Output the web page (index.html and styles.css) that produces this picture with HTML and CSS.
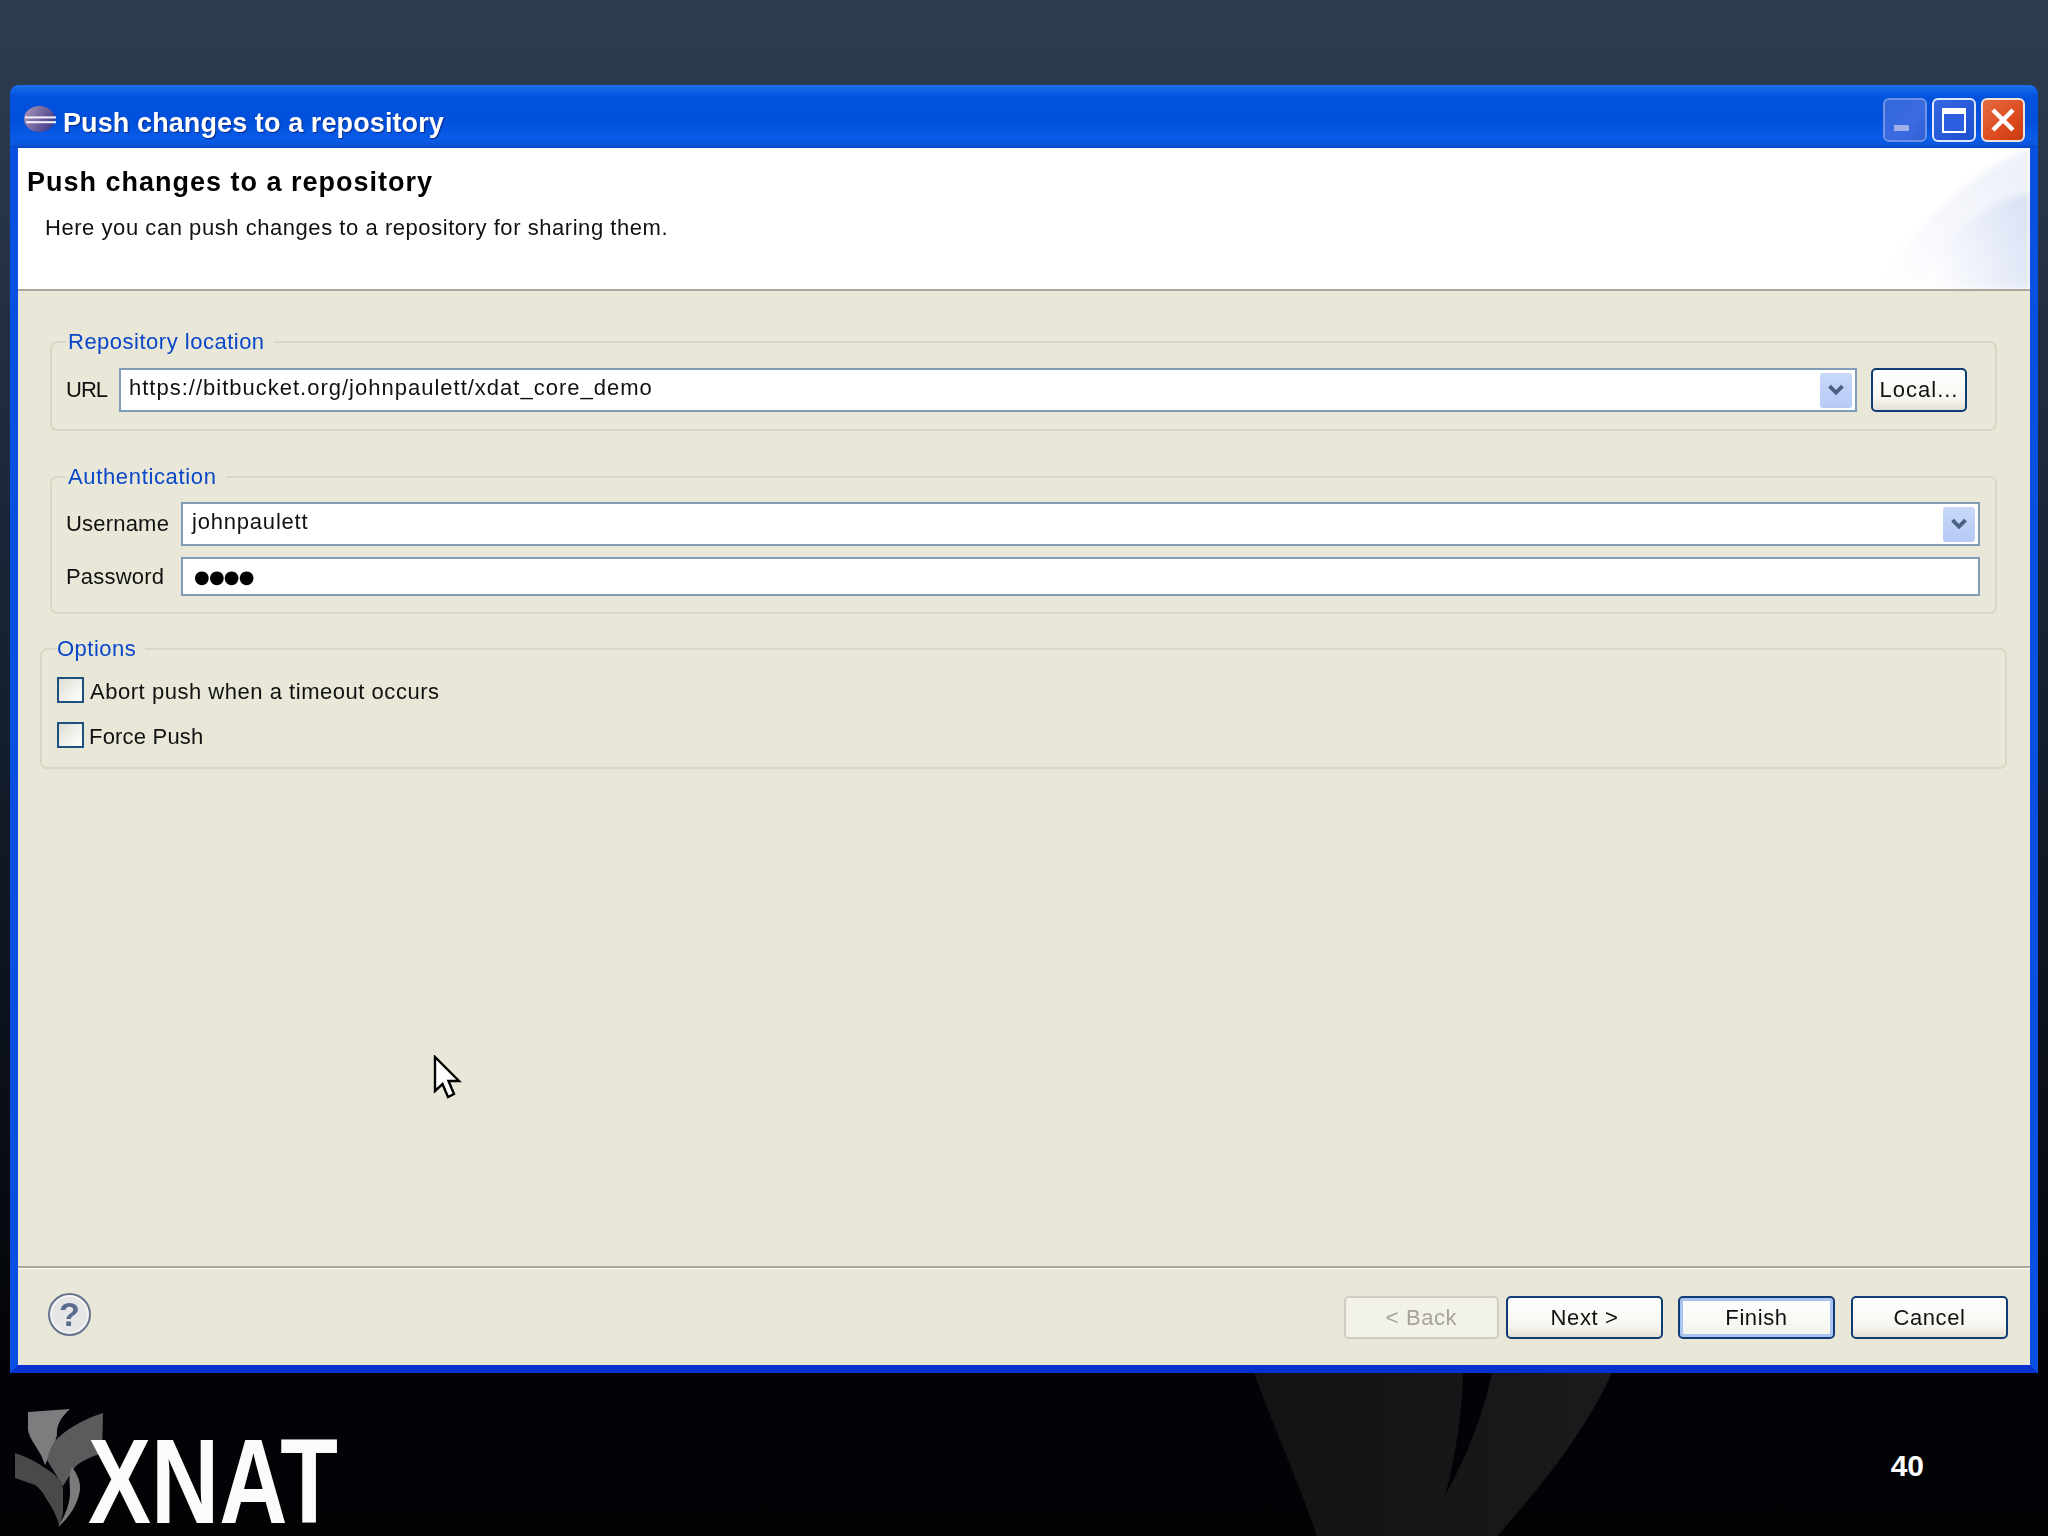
FILE: index.html
```html
<!DOCTYPE html>
<html lang="en">
<head>
<meta charset="utf-8">
<title>Push changes to a repository</title>
<link rel="stylesheet" href="styles.css">
</head>
<body>
<main class="window">
  <header class="titlebar">
    <svg class="app-icon" viewBox="0 0 32 26" aria-hidden="true">
      <defs>
        <linearGradient id="ecl" x1="0" y1="0.2" x2="1" y2="0.7">
          <stop offset="0" stop-color="#a692b4"/>
          <stop offset="0.55" stop-color="#6f5f9c"/>
          <stop offset="1" stop-color="#3c3a8c"/>
        </linearGradient>
      </defs>
      <ellipse cx="15.5" cy="13" rx="15.5" ry="13" fill="url(#ecl)"/>
      <rect x="1" y="10.4" width="31" height="2" fill="#f2f2fa"/>
      <rect x="2" y="15.2" width="30" height="2" fill="#f2f2fa"/>
    </svg>
    <span class="title-text">Push changes to a repository</span>
    <div class="win-controls">
      <span class="win-btn win-min"><span class="min-bar"></span></span>
      <span class="win-btn win-max"><span class="max-box"></span></span>
      <span class="win-btn win-close">
        <svg viewBox="0 0 24 24" class="close-x" aria-hidden="true"><path d="M2 2 L22 22 M22 2 L2 22" stroke="#fff" stroke-width="4.5" fill="none"/></svg>
      </span>
    </div>
  </header>

  <section class="banner">
    <svg class="banner-art" viewBox="0 0 150 141" preserveAspectRatio="none" aria-hidden="true">
      <defs>
        <linearGradient id="sw1" x1="0" y1="1" x2="1" y2="0.35">
          <stop offset="0" stop-color="#ffffff"/>
          <stop offset="1" stop-color="#eef1fa"/>
        </linearGradient>
        <linearGradient id="sw2" x1="0" y1="0.7" x2="1" y2="0.4">
          <stop offset="0" stop-color="#ffffff"/>
          <stop offset="1" stop-color="#dbe3f5"/>
        </linearGradient>
      </defs>
      <path d="M0 141 C30 80 90 25 150 0 V141 Z" fill="url(#sw1)"/>
      <path d="M40 141 C60 90 100 55 150 45 V141 Z" fill="url(#sw2)"/>
    </svg>
    <h1 class="banner-title">Push changes to a repository</h1>
    <p class="banner-desc">Here you can push changes to a repository for sharing them.</p>
  </section>

  <section class="content">
    <fieldset class="group group-inset group-repo">
      <legend class="group-legend">Repository location</legend>
      <div class="row-repo">
        <span class="field-label label-url">URL</span>
        <div class="combo combo-url">
          <span class="field-value value-url">https://bitbucket.org/johnpaulett/xdat_core_demo</span>
          <span class="combo-arrow">
            <svg viewBox="0 0 16 12" class="chev" aria-hidden="true"><path d="M2 2 L8 8 L14 2" stroke="#4a5f85" stroke-width="3.4" fill="none"/></svg>
          </span>
        </div>
        <span class="btn btn-local">Local...</span>
      </div>
    </fieldset>

    <fieldset class="group group-inset group-auth">
      <legend class="group-legend">Authentication</legend>
      <div class="auth-grid">
        <span class="field-label">Username</span>
        <div class="combo combo-user">
          <span class="field-value value-user">johnpaulett</span>
          <span class="combo-arrow">
            <svg viewBox="0 0 16 12" class="chev" aria-hidden="true"><path d="M2 2 L8 8 L14 2" stroke="#4a5f85" stroke-width="3.4" fill="none"/></svg>
          </span>
        </div>
        <span class="field-label">Password</span>
        <div class="combo combo-pass"><span class="pass-dots">●●●●</span></div>
      </div>
    </fieldset>

    <fieldset class="group group-options">
      <legend class="group-legend legend-flush">Options</legend>
      <div class="check-row"><span class="check"></span><span class="check-label">Abort push when a timeout occurs</span></div>
      <div class="check-row"><span class="check"></span><span class="check-label label-force">Force Push</span></div>
    </fieldset>

    <svg class="cursor" viewBox="0 0 30 46" aria-hidden="true">
      <path d="M2 2 V36 L9.5 29 L15 42 L21 39 L15.5 26 L26 26 Z" fill="#fff" stroke="#000" stroke-width="2.4" stroke-linejoin="miter"/>
    </svg>
  </section>

  <footer class="actions">
    <span class="help">?</span>
    <div class="action-buttons">
      <span class="btn btn-wide btn-disabled">&lt; Back</span>
      <span class="btn btn-wide">Next &gt;</span>
      <span class="btn btn-wide btn-default">Finish</span>
      <span class="btn btn-wide">Cancel</span>
    </div>
  </footer>
</main>

<footer class="slide-footer">
  <svg class="swoosh" viewBox="0 0 360 163" aria-hidden="true">
    <defs>
      <linearGradient id="swoosh-fill" x1="0" y1="0" x2="1" y2="0">
        <stop offset="0" stop-color="#121314"/>
        <stop offset="0.6" stop-color="#161718"/>
        <stop offset="1" stop-color="#1a1b1d"/>
      </linearGradient>
    </defs>
    <path d="M0 0 H209 C208 45 200 90 191 123 C212 85 230 40 238 0 H358 C330 60 290 110 243 163 H63 C45 110 20 55 0 0 Z" fill="url(#swoosh-fill)"/>
  </svg>
  <div class="brand">
    <svg class="brand-mark" viewBox="0 0 90 120" aria-hidden="true">
      <path d="M13 4 L55 1 C46 9 41 18 42 27 L40 34 L30 57 C26 42 12 30 13 19 Z" fill="#7b7d7f"/>
      <path d="M88 5 L87 45 C76 49 66 53 60 59 L48 78 L32 52 C34 42 38 34 44 29 C56 18 72 10 88 5 Z" fill="#5a5b5d"/>
      <path d="M0 45 C12 49 22 54 30 60 C40 66 46 72 48 80 L48 105 L45 119 C42 110 38 100 32 92 C28 84 24 80 20 77 L0 70 Z" fill="#48494b"/>
      <path d="M57 59 C62 66 66 74 65 82 C63 96 54 110 43 119 C50 108 55 96 55 84 C55 76 53 68 57 59 Z" fill="#797b7d"/>
    </svg>
    <svg class="brand-word" viewBox="0 0 252 90">
      <text class="brand-text" x="1" y="88" textLength="250" lengthAdjust="spacingAndGlyphs">XNAT</text>
    </svg>
  </div>
  <span class="page-no">40</span>
</footer>
</body>
</html>
```
FILE: styles.css
```css
* { box-sizing: border-box; }

html, body { height: 100%; }

body {
  margin: 0;
  width: 2048px;
  height: 1536px;
  overflow: hidden;
  display: flex;
  flex-direction: column;
  padding-top: 85px;
  background: linear-gradient(180deg, #2f3d52 0, #2c3a50 85px, #1a2638 520px, #0e1520 950px, #020306 1373px, #020305 100%);
  font-family: "Liberation Sans", Arial, sans-serif;
  font-size: 22px;
  color: #000;
}

/* Window frame */
.window {
  margin-left: 10px;
  width: 2028px;
  height: 1288px;
  flex: none;
  display: flex;
  flex-direction: column;
  position: relative;
  border: solid #0a50e2;
  border-width: 0 8px 8px;
  border-bottom-color: #0633d0;
  border-radius: 9px 9px 0 0;
  background: #e9e8d8;
  filter: blur(0.45px);
}

.titlebar {
  flex: none;
  height: 63px;
  margin: 0 -8px;
  padding: 7px 13px 0 14px;
  display: flex;
  align-items: center;
  border-radius: 9px 9px 0 0;
  background: linear-gradient(180deg, #1c72ec 0, #1466e8 6%, #0152dd 18%, #0050db 60%, #0a5ce8 85%, #0b56dc 94%, #0646c8 100%);
}

.app-icon {
  width: 32px;
  height: 26px;
  flex: none;
  margin-top: -3px;
}

.title-text {
  margin-left: 7px;
  margin-top: 6px;
  color: #fff;
  font-size: 27px;
  font-weight: 700;
  letter-spacing: 0.1px;
  text-shadow: 1px 1px 1px #0c2a86;
}

.win-controls {
  margin-left: auto;
  display: flex;
  gap: 5px;
}

.win-btn {
  width: 44px;
  height: 44px;
  border-radius: 6px;
  border: 2px solid #fff;
  display: flex;
  align-items: center;
  justify-content: center;
  position: relative;
}

.win-min {
  border-color: #6c93e6;
  background: linear-gradient(135deg, #3468d8, #3a6be0 60%, #2f5fd2);
  align-items: flex-end;
  justify-content: flex-start;
  padding: 0 0 9px 9px;
}

.min-bar {
  width: 15px;
  height: 6px;
  background: #a2aeeb;
}

.win-max {
  border-color: #dfe8fb;
  background: linear-gradient(135deg, #3567e0, #1c4fd0);
}

.max-box {
  width: 24px;
  height: 25px;
  border: 2px solid #fff;
  border-top-width: 6px;
  background: #2c5fe0;
}

.win-close {
  border-color: #f0e2dc;
  background: linear-gradient(135deg, #e46a42, #dc4b1f 60%, #c93a10);
}

.close-x {
  width: 24px;
  height: 24px;
}

/* Banner */
.banner {
  flex: none;
  height: 143px;
  position: relative;
  overflow: hidden;
  padding: 17px 0 0 9px;
  background: #fff;
  border-bottom: 2px solid #a9a799;
}

.banner-art {
  position: absolute;
  right: 0;
  top: 0;
  width: 150px;
  height: 141px;
  filter: blur(3px);
}

.banner-title {
  position: relative;
  margin: 0;
  font-size: 27px;
  line-height: 34px;
  font-weight: 700;
  letter-spacing: 1px;
  color: #000;
}

.banner-desc {
  position: relative;
  margin: 14px 0 0 18px;
  line-height: 30px;
  font-size: 22px;
  letter-spacing: 0.55px;
  color: #111;
}

/* Content */
.content {
  flex: 1;
  min-height: 0;
  position: relative;
  display: flex;
  flex-direction: column;
  padding: 38px 23px 0 22px;
  background: #e9e8d8;
}

.group {
  margin: 0;
  min-width: 0;
  border: 2px solid #d8d7c5;
  border-radius: 7px;
}

.group-inset { margin: 0 10px; }

.group-legend {
  padding: 0 9px 0 2px;
  line-height: 26px;
  font-size: 22px;
  letter-spacing: 0.5px;
  color: #0a46c8;
}

.group-auth .group-legend { letter-spacing: 0.65px; }

.legend-flush { padding-left: 0; }

.group-repo { padding: 13px 28px 17px 14px; }

.row-repo {
  display: flex;
  align-items: center;
}

.row-repo .field-label { width: 53px; flex: none; }

.group-auth {
  margin-top: 33px;
  padding: 12px 15px 16px 14px;
}

.auth-grid {
  display: grid;
  grid-template-columns: 115px 1fr;
  grid-template-rows: 44px 39px;
  row-gap: 11px;
  align-items: center;
}

.group-options {
  margin-top: 22px;
  padding: 15px 15px 19px;
}

.field-label {
  font-size: 22px;
  letter-spacing: 0.2px;
  color: #111;
}

.row-repo .label-url { letter-spacing: -1px; }

.combo {
  display: flex;
  align-items: center;
  min-width: 0;
  background: #fff;
  border: 2px solid #7f9db9;
}

.combo-url {
  flex: 1;
  height: 44px;
  padding: 0 3px 0 8px;
}

.combo-user {
  height: 44px;
  padding: 0 3px 0 9px;
}

.combo-pass {
  height: 39px;
  padding: 0 0 0 11px;
}

.field-value {
  flex: 1;
  font-size: 22px;
  color: #111;
}

.value-url {
  margin-top: -4px;
  letter-spacing: 1px;
}

.value-user {
  margin-top: -4px;
  letter-spacing: 0.8px;
}

.pass-dots {
  margin-top: 1px;
  font-family: "DejaVu Sans", sans-serif;
  font-size: 18px;
  letter-spacing: -0.8px;
  line-height: 1;
  color: #000;
}

.combo-arrow {
  flex: none;
  width: 32px;
  height: 35px;
  border-radius: 3px;
  display: flex;
  align-items: center;
  justify-content: center;
  background: linear-gradient(180deg, #c9d8f9, #b6caf5);
}

.chev { width: 18px; height: 13px; }

.btn {
  height: 43px;
  display: inline-flex;
  align-items: center;
  justify-content: center;
  border: 2px solid #0f3c74;
  border-radius: 5px;
  background: linear-gradient(180deg, #ffffff 0, #f7f6f1 70%, #e3e1d6 100%);
  font-size: 22px;
  letter-spacing: 0.6px;
  color: #111;
}

.btn-local {
  flex: none;
  width: 96px;
  height: 44px;
  margin-left: 14px;
  letter-spacing: 1px;
}

.btn-wide { width: 157px; padding-top: 1px; }

.btn-disabled {
  width: 155px;
  border-color: #cfcdbf;
  background: #f3f2ea;
  color: #a5a497;
}

.btn-default {
  border-color: #0f3c74;
  box-shadow: inset 0 0 0 3px #a9c4f0;
  background: linear-gradient(180deg, #fff, #f3f2ec);
}

.check-row {
  display: flex;
  align-items: center;
  height: 26px;
}

.check-row + .check-row { margin-top: 19px; }

.check {
  flex: none;
  width: 27px;
  height: 26px;
  border: 2px solid #1c5180;
  background: linear-gradient(135deg, #dedcd2, #f6f6f2 70%, #fff);
}

.check-label {
  margin: 4px 0 0 6px;
  font-size: 22px;
  letter-spacing: 0.53px;
  color: #111;
}

.label-force {
  margin-left: 5px;
  letter-spacing: 0.2px;
}

.cursor {
  position: absolute;
  left: 415px;
  top: 764px;
  width: 30px;
  height: 46px;
}

/* Footer of the dialog */
.actions {
  flex: none;
  height: 99px;
  display: flex;
  align-items: flex-start;
  padding: 28px 22px 0 30px;
  background: #e9e8d8;
  border-top: 2px solid #a9a799;
  box-shadow: inset 0 1px 0 #fff;
}

.help {
  width: 43px;
  height: 43px;
  margin-top: -3px;
  flex: none;
  border-radius: 50%;
  border: 2px solid #66748f;
  box-shadow: inset 0 0 0 2px #f4f4f2;
  background: #e6e6e6;
  display: flex;
  align-items: center;
  justify-content: center;
  font-family: "Liberation Sans", sans-serif;
  font-weight: 700;
  font-size: 34px;
  color: #5a6c8c;
}

.action-buttons {
  margin-left: auto;
  display: flex;
}

.action-buttons .btn:nth-child(2) { margin-left: 7px; }
.action-buttons .btn:nth-child(3) { margin-left: 15px; }
.action-buttons .btn:nth-child(4) { margin-left: 16px; }

/* Slide footer */
.slide-footer {
  flex: 1;
  position: relative;
  display: flex;
  align-items: flex-start;
  justify-content: space-between;
  padding: 35px 124px 0 15px;
}

.swoosh {
  position: absolute;
  left: 1254px;
  top: 0;
  width: 360px;
  height: 163px;
}

.brand {
  position: relative;
  display: flex;
  align-items: flex-start;
}

.brand-mark {
  width: 90px;
  height: 120px;
  flex: none;
}

.brand-word {
  width: 252px;
  height: 90px;
  flex: none;
  margin: 27px 0 0 -18px;
}

.brand-text {
  font-family: "Liberation Sans", Arial, sans-serif;
  font-size: 120px;
  font-weight: 700;
  fill: #fbfbfb;
}

.page-no {
  position: relative;
  margin-top: 41px;
  color: #fff;
  font-size: 30px;
  line-height: 34px;
  font-weight: 700;
}
```
